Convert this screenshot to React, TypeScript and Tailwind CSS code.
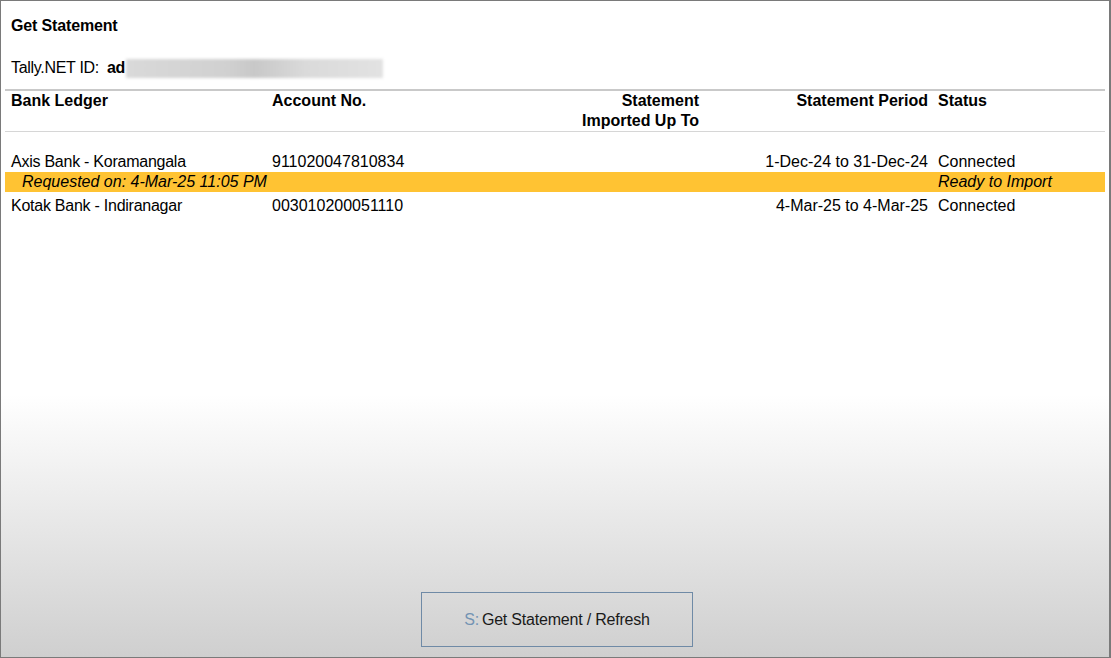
const COLS = "grid grid-cols-[261px_244px_195px_229px_1fr]";

const ROWS = [
  {
    ledger: "Axis Bank - Koramangala",
    account: "911020047810834",
    imported: "",
    period: "1-Dec-24 to 31-Dec-24",
    status: "Connected",
    note: "Requested on: 4-Mar-25 11:05 PM",
    noteStatus: "Ready to Import",
  },
  {
    ledger: "Kotak Bank - Indiranagar",
    account: "003010200051110",
    imported: "",
    period: "4-Mar-25 to 4-Mar-25",
    status: "Connected",
  },
];

export default function App() {
  return (
    <div
      className="flex h-[658px] w-[1111px] flex-col border border-r-2 border-[#7a7a7a] bg-[linear-gradient(to_bottom,#ffffff_0%,#ffffff_60%,#cfcfcf_100%)] px-[4px] text-[16px] leading-[20px] text-black"
      style={{ fontFamily: '"Liberation Sans", Arial, sans-serif' }}
    >
      <div className="pl-[6px] pt-[15px] font-bold tracking-[-0.15px]">Get Statement</div>

      <div className="mt-[22px] flex items-center pl-[6px] tracking-[-0.3px]">
        <span>Tally.NET ID:</span>
        <span className="ml-[8px] font-bold">ad</span>
        <span className="ml-px h-[19px] w-[257px] bg-[linear-gradient(to_right,#d9d9d9,#d0d0d0_40%,#c8c8c8_50%,#dadada_70%,#e2e2e2)] blur-[1.5px]" />
      </div>

      <div className="mt-[11px] h-[2px] bg-[#c9c9c9]" />

      <div className={`${COLS} font-bold`}>
        <div className="pl-[6px]">Bank Ledger</div>
        <div className="pl-[6px]">Account No.</div>
        <div className="pr-[6px] text-right">
          Statement
          <br />
          Imported Up To
        </div>
        <div className="pr-[6px] text-right">Statement Period</div>
        <div className="pl-[4px]">Status</div>
      </div>

      <div className="h-px bg-[#d6d6d6]" />

      <div className="mt-[20px]">
        {ROWS.map((r, i) => (
          <div key={r.ledger} className={i > 0 ? "pt-[4px]" : ""}>
            <div className={COLS}>
              <div className="pl-[6px] tracking-[-0.25px]">{r.ledger}</div>
              <div className="pl-[6px]">{r.account}</div>
              <div className="pr-[6px] text-right">{r.imported}</div>
              <div className="pr-[6px] text-right">{r.period}</div>
              <div className="pl-[4px]">{r.status}</div>
            </div>
            {r.note && (
              <div className={`${COLS} bg-[#ffc333] italic`}>
                <div className="col-span-4 pl-[17px]">{r.note}</div>
                <div className="pl-[4px]">{r.noteStatus}</div>
              </div>
            )}
          </div>
        ))}
      </div>

      <div className="mt-auto mb-[10px] flex justify-center pl-[4px]">
        <button className="flex h-[55px] w-[272px] items-center justify-center border border-[#6f8aa6] bg-transparent text-[16px] tracking-[-0.2px] text-[#1a1a1a]">
          <span className="text-[#7393b3]">S:</span>
          <span className="ml-[3px]">Get Statement / Refresh</span>
        </button>
      </div>
    </div>
  );
}
